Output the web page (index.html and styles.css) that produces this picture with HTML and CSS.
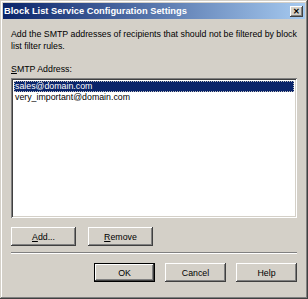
FILE: index.html
```html
<!DOCTYPE html>
<html lang="en">
<head>
    <meta charset="UTF-8">
    <title>Block List Service Configuration Settings</title>
    <link rel="stylesheet" href="styles.css">
</head>
<body>
    <div class="window">
        <div class="titlebar">
            <span class="title">Block List Service Configuration Settings</span>
            <button class="closeButton">&#x2715;</button>
        </div>
        <div class="content">
            <p class="intro">Add the SMTP addresses of recipients that should not be filtered by block<br>list filter rules.</p>
            <p class="label"><u>S</u>MTP Address:</p>
            <div class="listBox">
                <div class="item selected">sales@domain.com</div>
                <div class="item">very_important@domain.com</div>
            </div>
            <div class="listButtons">
                <button class="button"><u>A</u>dd...</button>
                <button class="button"><u>R</u>emove</button>
            </div>
            <div class="separator"></div>
            <div class="dialogButtons">
                <button class="button default">OK</button>
                <button class="button">Cancel</button>
                <button class="button">Help</button>
            </div>
        </div>
    </div>
</body>
</html>
```

FILE: styles.css
```css
body {
    margin: 0;
    padding: 0;
    font-family: "Liberation Sans", Arial, sans-serif;
    font-size: 8.8px;
    background-color: #d4d0c8;
}
.window {
    width: 308px;
    height: 299px;
    box-sizing: border-box;
    background-color: #d4d0c8;
    padding: 3px;
    box-shadow: inset -1px -1px 0 #404040, inset 1px 1px 0 #d4d0c8, inset -2px -2px 0 #808080, inset 2px 2px 0 #fff;
}
.titlebar {
    height: 16px;
    display: flex;
    align-items: center;
    justify-content: space-between;
    padding: 0 2px 0 1px;
    background: linear-gradient(to right, #0a246a, #a6caf0);
    color: #fff;
}
.title {
    font-family: "Liberation Sans", Arial, sans-serif;
    font-weight: bold;
    font-size: 9.3px;
}
.closeButton {
    width: 13px;
    height: 11px;
    padding: 0;
    border: none;
    background-color: #d4d0c8;
    color: #000;
    font-size: 8px;
    font-weight: bold;
    line-height: 11px;
    box-shadow: inset -1px -1px 0 #404040, inset 1px 1px 0 #fff, inset -2px -2px 0 #808080;
}
.content {
    padding: 0 8px 0 8px;
}
.intro {
    margin: 9px 0 0 0;
    line-height: 12px;
    white-space: nowrap;
}
.label {
    margin: 11px 0 0 0;
    line-height: 12px;
}
u {
    text-decoration: underline;
}
.listBox {
    margin-top: 3px;
    height: 140px;
    box-sizing: border-box;
    background-color: #fff;
    padding: 3px 3px;
    box-shadow: inset 1px 1px 0 #808080, inset -1px -1px 0 #fff, inset 2px 2px 0 #404040, inset -2px -2px 0 #d4d0c8;
}
.item {
    height: 11px;
    line-height: 11px;
    padding-left: 1px;
}
.selected {
    background-color: #0a246a;
    color: #fff;
    outline: 1px dotted #c0c0c0;
    outline-offset: -1px;
}
.listButtons {
    display: flex;
    gap: 12px;
    margin-top: 9px;
}
.button {
    width: 65px;
    height: 19px;
    padding: 0;
    border: none;
    font-family: "Liberation Sans", Arial, sans-serif;
    font-size: 8.8px;
    color: #000;
    background-color: #d4d0c8;
    box-shadow: inset -1px -1px 0 #404040, inset 1px 1px 0 #fff, inset -2px -2px 0 #808080;
}
.separator {
    margin-top: 6px;
    border-top: 1px solid #808080;
    border-bottom: 1px solid #fff;
    height: 0;
}
.dialogButtons {
    display: flex;
    justify-content: flex-end;
    gap: 10px;
    margin-top: 9px;
}
.dialogButtons .button {
    width: 61px;
}
.default {
    box-shadow: inset 0 0 0 1px #000, inset -2px -2px 0 #404040, inset 2px 2px 0 #fff, inset -3px -3px 0 #808080;
}
```
